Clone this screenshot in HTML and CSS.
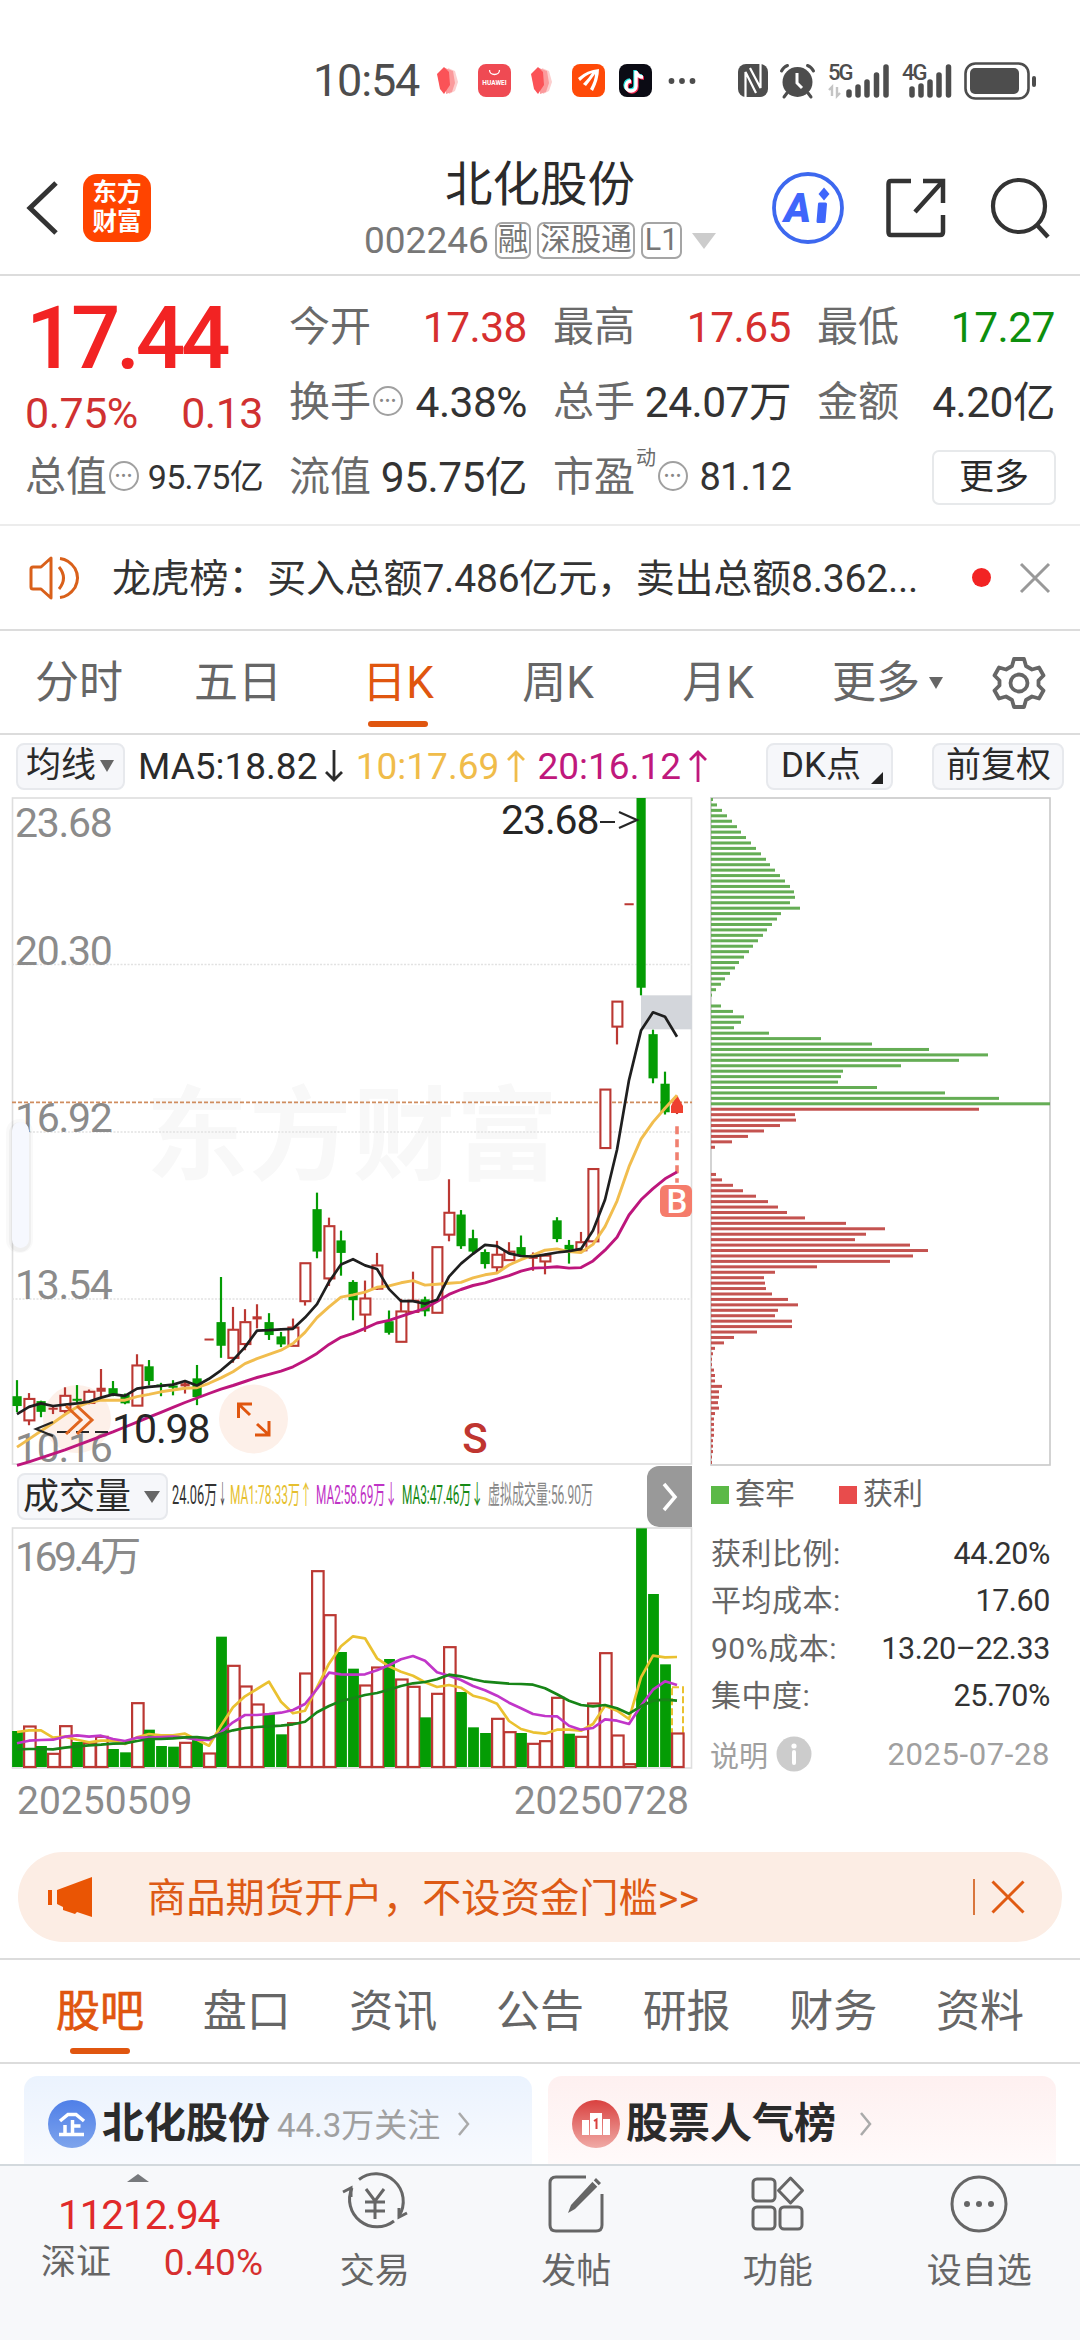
FILE: index.html
```html
<!DOCTYPE html>
<html lang="zh-CN">

<head>
    <meta charset="UTF-8" />
    <meta name="viewport" content="width=device-width, initial-scale=1.0" />
    <title>北化股份 002246</title>
    <link rel="stylesheet" href="styles.css">
</head>

<body>

    <div class="status-bar">
        <span class="time">10:54</span>
        <svg class="st-petal" width="21" height="28" viewBox="0 0 21 28">
            <path d="M11 1l7 3 3 11-3 9-6 3z" fill="#fccfcf" />
            <path d="M8 1l8 3 2 12-3 9-6 2z" fill="#fb9a9c" />
            <path d="M7 0l5 5 1 13-6 9-4-5-3-15z" fill="#fb5257" />
        </svg>
        <svg class="st-app" width="33" height="33" viewBox="0 0 33 33">
            <rect width="33" height="33" rx="8" fill="#ef4a53" />
            <path d="M11.500 6a5 4.500 0 0 0 10 0" fill="none" stroke="#fff" stroke-width="1.300" />
            <text x="16.500" y="21" text-anchor="middle" class="hw">HUAWEI</text>
        </svg>
        <svg class="st-petal" width="21" height="28" viewBox="0 0 21 28">
            <path d="M11 1l7 3 3 11-3 9-6 3z" fill="#fccfcf" />
            <path d="M8 1l8 3 2 12-3 9-6 2z" fill="#fb9a9c" />
            <path d="M7 0l5 5 1 13-6 9-4-5-3-15z" fill="#fb5257" />
        </svg>
        <svg class="st-app" width="33" height="33" viewBox="0 0 33 33">
            <rect width="33" height="33" rx="8" fill="#ff4a08" />
            <path d="M6 14Q15 6 27 5Q27 15 21 27L18 25Q23 16 23 10Q18 17 14 22L11 20Q17 14 20 9Q14 11 8 17z" fill="#fff" />
        </svg>
        <svg class="st-app st-tiktok" width="33" height="33" viewBox="0 0 33 33">
            <rect width="33" height="33" rx="8" fill="#0b0b14" />
            <g fill="none" stroke-width="3.400">
                <path d="M16 6v15a5 5 0 1 1-5-5M16 7q2 5 7 5" stroke="#27e6e4" />
                <path d="M18 8v15a5 5 0 1 1-5-5M18 9q2 5 7 5" stroke="#fb2c55" />
                <path d="M17 7v15a5 5 0 1 1-5-5M17 8q2 5 7 5" stroke="#fff" />
            </g>
        </svg>
        <svg class="st-more" width="28" height="8" viewBox="0 0 28 8" fill="#4d4d4d">
            <circle cx="3.500" cy="4" r="2.900" />
            <circle cx="14" cy="4" r="2.900" />
            <circle cx="24.500" cy="4" r="2.900" />
        </svg>
        <svg class="st-nfc" width="30" height="33" viewBox="0 0 30 33">
            <rect width="30" height="33" rx="8" fill="#4d4d4d" />
            <path d="M7.500 33V8L18 29M12 4l10.500 20V0" stroke="#fff" stroke-width="2.200" fill="none" />
        </svg>
        <svg class="st-alarm" width="35" height="34" viewBox="0 0 35 34">
            <circle cx="17.500" cy="18" r="15" fill="#4d4d4d" />
            <path d="M1.500 7q2-4 6-5.500M33.500 7q-2-4-6-5.500M7 29l-3 4M28 29l3 4" stroke="#4d4d4d" stroke-width="3" fill="none" stroke-linecap="round" />
            <path d="M17 9v10l5 5" stroke="#fff" stroke-width="3" fill="none" />
        </svg>
        <svg class="st-signal" width="62" height="35" viewBox="0 0 62 35">
            <text x="0" y="17" class="net">5G</text>
            <path d="M4 33V24l-3 3M9 24v9l3-3" stroke="#c4c4c4" stroke-width="2.400" fill="none" />
            <path d="M21 32v-3M30 32v-8M39 32V19M48.500 32V12M58 32V4" stroke="#4d4d4d" stroke-width="5.500" stroke-linecap="round" />
        </svg>
        <svg class="st-signal2" width="50" height="35" viewBox="0 0 50 35">
            <text x="0" y="17" class="net">4G</text>
            <path d="M10 32v-6M19 32v-9M28 32V19M37 32V12M46.500 32V4" stroke="#4d4d4d" stroke-width="5.500" stroke-linecap="round" />
        </svg>
        <svg class="st-battery" width="74" height="38" viewBox="0 0 74 38">
            <rect x="1.500" y="1.500" width="63" height="35" rx="10" fill="none" stroke="#4d4d4d" stroke-width="2.600" />
            <rect x="6" y="6" width="49" height="26" rx="5" fill="#4d4d4d" />
            <rect x="68" y="14" width="4" height="11" rx="2" fill="#4d4d4d" />
        </svg>
    </div>

    <header class="header">
        <svg class="back" width="34" height="56" viewBox="0 0 34 56">
            <path d="M30 3L4 28l26 25" fill="none" stroke="#333" stroke-width="5" />
        </svg>
        <div class="logo">东方<br>财富</div>
        <div class="title">
            <h1>北化股份</h1>
            <div class="code">
                <span class="num">002246</span>
                <span class="tag">融</span>
                <span class="tag">深股通</span>
                <span class="tag">L1</span>
                <svg width="24" height="16" viewBox="0 0 24 16">
                    <path d="M0 0h24L12 16z" fill="#ccc" />
                </svg>
            </div>
        </div>
        <svg class="ai" width="72" height="72" viewBox="0 0 72 72">
            <circle cx="36" cy="36" r="34" fill="none" stroke="#3d68ef" stroke-width="3.800" />
            <text x="12" y="50" class="ai-text">A</text>
            <path d="M47.500 32h6l-1.500 17.500h-6z" fill="#3f66fb" stroke="#3f66fb" stroke-width="3" stroke-linejoin="round" />
            <path d="M52 15.500l5.500 6.500-5.500 6.500-5.500-6.500z" fill="#3f66fb" />
        </svg>
        <svg class="share" width="60" height="60" viewBox="0 0 60 60" fill="none" stroke="#333" stroke-width="4.500">
            <path d="M25 3H5Q2.500 3 2.500 6V54Q2.500 57 5 57H54Q57 57 57 54V37" />
            <path d="M37 3H57V25M57 3L29 34" />
        </svg>
        <svg class="search" width="62" height="62" viewBox="0 0 62 62" fill="none" stroke="#333" stroke-width="4.200">
            <circle cx="29" cy="29" r="26" />
            <path d="M47 48L58 60" stroke-width="4.500" />
        </svg>
    </header>

    <section class="quote">
        <div class="price-box">
            <div class="price">17.44</div>
            <div class="change"><span>0.75%</span><span>0.13</span></div>
        </div>
        <div class="cell"><label>今开</label><b class="red">17.38</b></div>
        <div class="cell"><label>最高</label><b class="red">17.65</b></div>
        <div class="cell"><label>最低</label><b class="green">17.27</b></div>
        <div class="cell"><label>换手<i class="tip">•••</i></label><b>4.38%</b></div>
        <div class="cell"><label>总手</label><b>24.07万</b></div>
        <div class="cell"><label>金额</label><b>4.20亿</b></div>
        <div class="cell"><label>总值<i class="tip">•••</i></label><b class="small">95.75亿</b></div>
        <div class="cell"><label>流值</label><b>95.75亿</b></div>
        <div class="cell"><label>市盈<sup>动</sup><i class="tip">•••</i></label><b class="mid">81.12</b></div>
        <div class="cell"><button class="more">更多</button></div>
    </section>

    <section class="news">
        <svg class="horn" width="52" height="46" viewBox="0 0 52 46" fill="none" stroke="#d9601a" stroke-width="3">
            <path d="M22 3v40L12 34H4q-2 0-2-2V14q0-2 2-2h8z" stroke-linejoin="round" />
            <path d="M30 12q9 11 0 22M31 3.500q9 1 15 10q5 9 0 19q-6 9-15 10" />
        </svg>
        <p>龙虎榜：买入总额7.486亿元，卖出总额8.362...</p>
        <span class="dot"></span>
        <svg class="close" width="30" height="30" viewBox="0 0 30 30">
            <path d="M1 1l28 28M29 1L1 29" stroke="#999" stroke-width="3" />
        </svg>
    </section>

    <nav class="periods">
        <span>分时</span>
        <span>五日</span>
        <span class="active">日K</span>
        <span>周K</span>
        <span>月K</span>
        <span class="drop">更多<i></i></span>
        <svg width="52" height="52" viewBox="0 0 52 52" fill="none" stroke="#666" stroke-width="3.800">
            <path d="M21 2h10l2 7 6 3.500 7-2 4.500 8-5 5v5l5 5-4.500 8-7-2-6 3.500-2 7H21l-2-7-6-3.500-7 2-4.500-8 5-5v-5l-5-5 4.500-8 7 2L19 9z" stroke-linejoin="round" />
            <circle cx="26" cy="26" r="8.500" />
        </svg>
    </nav>

    <div class="ma-row">
        <button class="pill-btn ma-btn">均线<i></i></button>
        <div class="ma-values">
            <span>MA5:18.82<svg class="arrow" viewBox="0 0 20 32"><path d="M10 0v30M2 22l8 8 8-8" /></svg></span>
            <span class="yellow">10:17.69<svg class="arrow" viewBox="0 0 20 32"><path d="M10 32V2M2 10l8-8 8 8" /></svg></span>
            <span class="magenta">20:16.12<svg class="arrow" viewBox="0 0 20 32"><path d="M10 32V2M2 10l8-8 8 8" /></svg></span>
        </div>
        <button class="pill-btn dk-btn">DK点<i></i></button>
        <button class="pill-btn fq-btn">前复权</button>
    </div>

    <main class="charts">
        <div class="left">
            <svg id="kline" width="692" height="669"></svg>
            <div class="vol-head">
                <button class="pill-btn vol-btn">成交量<i></i></button>
                <svg class="vol-legend" width="424" height="40">
                    <text x="0" y="27" textLength="45" lengthAdjust="spacingAndGlyphs" fill="#333">24.06万</text>
                    <text x="47" y="27" textLength="7" lengthAdjust="spacingAndGlyphs" fill="#333">↓</text>
                    <text x="58" y="27" textLength="82" lengthAdjust="spacingAndGlyphs" fill="#e6bf2e">MA1:78.33万↑</text>
                    <text x="144" y="27" textLength="81" lengthAdjust="spacingAndGlyphs" fill="#bf33c6">MA2:58.69万↓</text>
                    <text x="230" y="27" textLength="81" lengthAdjust="spacingAndGlyphs" fill="#168a16">MA3:47.46万↓</text>
                    <text x="316" y="27" textLength="105" lengthAdjust="spacingAndGlyphs" fill="#888">虚拟成交量:56.90万</text>
                </svg>
                <div class="next">
                    <svg width="16" height="30" viewBox="0 0 16 30">
                        <path d="M2 2l11 13L2 28" fill="none" stroke="#fff" stroke-width="3.500" />
                    </svg>
                </div>
            </div>
            <svg id="volume" width="692" height="242"></svg>
            <div class="dates"><span>20250509</span><span>20250728</span></div>
        </div>

        <div class="right">
            <svg id="chips" width="342" height="669"></svg>
            <div class="legend">
                <span><i class="sq-green"></i>套牢</span>
                <span><i class="sq-red"></i>获利</span>
            </div>
            <dl class="stats">
                <div><dt>获利比例:</dt><dd>44.20%</dd></div>
                <div><dt>平均成本:</dt><dd>17.60</dd></div>
                <div><dt>90%成本:</dt><dd>13.20–22.33</dd></div>
                <div><dt>集中度:</dt><dd>25.70%</dd></div>
            </dl>
            <div class="note">
                <span>说明</span>
                <svg width="36" height="36" viewBox="0 0 36 36">
                    <circle cx="18" cy="18" r="17.500" fill="#ccc" />
                    <circle cx="18" cy="10" r="2.600" fill="#fff" />
                    <path d="M18 16v11" stroke="#fff" stroke-width="4" stroke-linecap="round" />
                </svg>
                <span class="date">2025-07-28</span>
            </div>
        </div>
    </main>

    <div class="promo">
        <svg class="mega" width="46" height="40" viewBox="0 0 46 40" fill="#ea5504">
            <rect x="0" y="13" width="4" height="15" />
            <path d="M9 13L44 0v40l-15-5-2 2-12-4v-3l-6-3z" />
        </svg>
        <p>商品期货开户，不设资金门槛&gt;&gt;</p>
        <span class="bar"></span>
        <svg width="34" height="34" viewBox="0 0 34 34">
            <path d="M1.500 1.500l31 31M32.500 1.500l-31 31" stroke="#e05a12" stroke-width="3" />
        </svg>
    </div>

    <nav class="tabs">
        <span class="active">股吧</span>
        <span>盘口</span>
        <span>资讯</span>
        <span>公告</span>
        <span>研报</span>
        <span>财务</span>
        <span>资料</span>
    </nav>

    <div class="cards">
        <div class="card blue">
            <svg width="48" height="48" viewBox="0 0 48 48">
                <defs>
                    <linearGradient id="gb" x2="0" y2="1"><stop stop-color="#4f7fe8" /><stop offset="1" stop-color="#7ea4ec" /></linearGradient>
                </defs>
                <circle cx="24" cy="24" r="24" fill="url(#gb)" />
                <path d="M12 21L20 14.500h8L36 21M24.500 20v13M24.500 26h8M17 25v8M11 34.500h25" fill="none" stroke="#fff" stroke-width="3.500" />
            </svg>
            <strong>北化股份</strong>
            <em>44.3万关注</em>
            <svg class="chev" width="14" height="24" viewBox="0 0 14 24"><path d="M2 1l9 11-9 11" /></svg>
        </div>
        <div class="card pink">
            <svg width="48" height="48" viewBox="0 0 48 48">
                <defs>
                    <linearGradient id="gr" x2="0" y2="1"><stop stop-color="#d9413f" /><stop offset="1" stop-color="#f0aaa6" /></linearGradient>
                </defs>
                <circle cx="24" cy="24" r="24" fill="url(#gr)" />
                <path d="M10 20h7v15h-7zM18 13h12v22H18zM31 19h7v16h-7z" fill="#fff" />
                <path d="M22 21l2.500-1.500V29" stroke="#d9413f" stroke-width="2" fill="none" />
            </svg>
            <strong>股票人气榜</strong>
            <svg class="chev wide" width="14" height="24" viewBox="0 0 14 24"><path d="M2 1l9 11-9 11" /></svg>
        </div>
    </div>

    <footer class="toolbar">
        <div class="index">
            <svg width="22" height="8" viewBox="0 0 22 8"><path d="M0 8L11 0l11 8z" fill="#77797c" /></svg>
            <b>11212.94</b>
            <div><span>深证</span><span class="red">0.40%</span></div>
        </div>
        <div class="tool">
            <svg width="66" height="60" viewBox="0 0 66 60" fill="none" stroke="#666" stroke-width="3">
                <path d="M17 6.500A27.500 27.500 0 0 1 57 43M52 48A27.500 27.500 0 0 1 10 15" />
                <path d="M1 19l8-4v9M65 40l-8 4v-9" />
                <path d="M24 16l9 12 9-12M33 28v18M23 29h20M23 38h20" />
            </svg>
            <span>交易</span>
        </div>
        <div class="tool">
            <svg width="60" height="60" viewBox="0 0 60 60">
                <path d="M40 4H10Q4 4 4 10v42q0 6 6 6h40q6 0 6-6V21" fill="none" stroke="#666" stroke-width="3" />
                <path d="M50 5l5 5-26 26-7 4 3-8z" fill="#666" />
                <path d="M46 7l7 7" stroke="#f7f8fa" stroke-width="2" />
            </svg>
            <span>发帖</span>
        </div>
        <div class="tool">
            <svg width="60" height="60" viewBox="0 0 60 60" fill="none" stroke="#666" stroke-width="3">
                <rect x="5" y="6" width="22" height="22" rx="4" />
                <rect x="5" y="34" width="22" height="22" rx="4" />
                <rect x="32" y="34" width="22" height="22" rx="4" />
                <path d="M42.500 5l12 12.500-12 12.500-12-12.500z" stroke-linejoin="round" />
            </svg>
            <span>功能</span>
        </div>
        <div class="tool">
            <svg width="60" height="60" viewBox="0 0 60 60">
                <circle cx="30" cy="31" r="27" fill="none" stroke="#666" stroke-width="3" />
                <g fill="#666"><circle cx="18" cy="31" r="3" /><circle cx="30" cy="31" r="3" /><circle cx="42" cy="31" r="3" /></g>
            </svg>
            <span>设自选</span>
        </div>
    </footer>

    <script src="script.js"></script>

</body>

</html>
```

FILE: styles.css
```css
* {
    box-sizing: border-box;
    margin: 0;
    padding: 0;
}

body {
    width: 1080px;
    height: 2340px;
    overflow: hidden;
    background: #fff;
    color: #333;
    font-family: Roboto, "Noto Sans CJK SC", sans-serif;
}

svg {
    display: block;
    flex: none;
    overflow: visible;
}

i,
em {
    font-style: normal;
}

button {
    font-family: inherit;
    color: #2a2a2a;
    white-space: nowrap;
}

/* status bar */
.status-bar {
    display: flex;
    align-items: center;
    height: 140px;
    padding: 21px 0 0 313px;
}

.time {
    width: 124px;
    font-size: 45px;
    letter-spacing: -1.2px;
    color: #4d4d4d;
}

.st-app {
    margin: 0 20px;
}

.st-tiktok {
    margin: 0 16px 0 -6px;
}

.st-nfc {
    margin-left: 42px;
}

.st-alarm {
    margin-left: 12px;
}

.st-signal {
    margin-left: 13px;
}

.st-signal2 {
    margin-left: 12px;
}

.st-battery {
    margin-left: 12px;
}

.hw {
    font-size: 6.5px;
    font-weight: bold;
    fill: #fff;
}

.net {
    font-size: 22px;
    font-weight: 500;
    letter-spacing: -2px;
    fill: #4d4d4d;
}

/* header */
.header {
    display: flex;
    align-items: center;
    height: 136px;
    padding: 2px 28px 0 26px;
    border-bottom: 2px solid #dcdcdc;
}

.logo {
    width: 68px;
    height: 68px;
    margin-left: 23px;
    padding-top: 4px;
    border-radius: 14px;
    background: #ff4400;
    color: #fff;
    font-size: 24.5px;
    font-weight: bold;
    line-height: 29px;
    text-align: center;
}

.title {
    width: 352px;
    margin-left: 213px;
    text-align: center;
}

.title h1 {
    padding-top: 3px;
    font-size: 47.5px;
    font-weight: normal;
    line-height: 60px;
    color: #2b2b2b;
}

.code {
    display: flex;
    align-items: center;
    gap: 6px;
    height: 48px;
    margin-top: 2px;
    color: #777;
    white-space: nowrap;
}

.code .num {
    font-size: 37px;
}

.tag {
    flex: none;
    padding: 0 1px;
    height: 37px;
    border: 2px solid #a5a5a5;
    border-radius: 7px;
    font-size: 30.5px;
    line-height: 32px;
}

.tag:nth-child(4) {
    padding: 0 2px;
}

.code svg {
    margin-left: 4px;
}

.ai {
    margin-left: 56px;
}

.ai-text {
    font-size: 41px;
    font-weight: 900;
    font-style: italic;
    fill: #3f66fb;
}

.share {
    margin-left: 42px;
}

.search {
    margin-left: 44px;
}

/* quote */
.quote {
    display: grid;
    grid-template-columns: repeat(4, 1fr);
    grid-auto-rows: 75px;
    column-gap: 26px;
    height: 250px;
    padding: 14px 25px 0;
    border-bottom: 2px solid #ececec;
}

.price-box {
    grid-row: span 2;
}

.price {
    height: 97px;
    padding-left: 1px;
    font-size: 87px;
    font-weight: 500;
    letter-spacing: -4.4px;
    line-height: 97px;
    color: #f22323;
}

.change {
    display: flex;
    justify-content: space-between;
    font-size: 43px;
    letter-spacing: -.5px;
    line-height: 53px;
    color: #d03131;
}

.cell {
    display: flex;
    align-items: center;
    justify-content: space-between;
    font-size: 42.5px;
    line-height: 75px;
    white-space: nowrap;
}

.cell label {
    display: flex;
    align-items: center;
    font-size: 41px;
    color: #6a6a6a;
}

.cell b {
    font-weight: normal;
    letter-spacing: -.5px;
}

.cell .small {
    font-size: 34px;
    letter-spacing: -.7px;
}

.cell .mid {
    font-size: 38px;
    letter-spacing: -.8px;
}

.tip {
    width: 30px;
    height: 30px;
    margin: -4px 0 0 2px;
    border: 2px solid #a0a0a0;
    border-radius: 50%;
    font-size: 15px;
    letter-spacing: 1px;
    line-height: 27px;
    text-align: center;
    color: #888;
}

.cell sup {
    align-self: flex-start;
    margin: 6px 0 0 1px;
    font-size: 20px;
    line-height: 24px;
}

.more {
    width: 124px;
    height: 55px;
    margin: 0 -1px 0 auto;
    border: 2px solid #e7e9eb;
    border-radius: 7px;
    background: #fff;
    font-size: 35px;
    line-height: 46px;
}

.red {
    color: #d62f2f;
}

.green {
    color: #0d8f0d;
}

/* news */
.news {
    display: flex;
    align-items: center;
    height: 105px;
    padding: 0 29px;
    border-bottom: 2px solid #dcdcdc;
}

.news p {
    width: 891px;
    padding: 0 0 5px 31px;
    font-size: 39px;
    letter-spacing: -.2px;
    white-space: nowrap;
}

.dot {
    flex: none;
    width: 19px;
    height: 19px;
    border-radius: 50%;
    background: #f22323;
}

.close {
    margin-left: 29px;
}

/* chart period tabs */
.periods {
    display: grid;
    grid-template-columns: 158px repeat(4, 160px) 195px 52px;
    align-items: center;
    height: 104px;
    border-bottom: 2px solid #dcdcdc;
    font-size: 44px;
    line-height: 104px;
    text-align: center;
    color: #666;
}

.active {
    position: relative;
    color: #e0560f;
}

.active::after {
    content: "";
    position: absolute;
    left: 50%;
    bottom: 8px;
    width: 60px;
    height: 6px;
    margin-left: -30px;
    border-radius: 3px;
    background: #e0560f;
}

.drop {
    display: flex;
    align-items: center;
    padding-left: 34px;
}

.drop i,
.ma-btn i,
.vol-btn i {
    margin-left: 9px;
    border: 7px solid transparent;
    border-top: 12px solid #666;
    border-bottom: 0;
}

/* averages */
.ma-row {
    display: flex;
    align-items: center;
    height: 62px;
    padding-left: 16px;
}

.pill-btn {
    display: flex;
    align-items: center;
    height: 47px;
    border: 2px solid #e7e9ed;
    border-radius: 8px;
    background: #f6f7fa;
    font-size: 35px;
    line-height: 40px;
}

.ma-btn {
    width: 109px;
    padding-left: 8px;
}

.ma-btn i {
    margin-left: 4px;
}

.ma-values {
    display: flex;
    justify-content: space-between;
    width: 583px;
    padding-left: 13px;
    font-size: 37px;
    letter-spacing: 0;
    white-space: nowrap;
    color: #2b2b2b;
}

.ma-values span {
    display: flex;
    align-items: center;
}

.arrow {
    width: 20px;
    height: 32px;
    margin-left: 7px;
    fill: none;
    stroke: currentColor;
    stroke-width: 2.8px;
}

.ma-values .yellow {
    color: #f0bc4a;
}

.ma-values .magenta {
    color: #c0187c;
}

.dk-btn {
    width: 127px;
    margin-left: 58px;
    padding-left: 13px;
}

.dk-btn i {
    align-self: flex-end;
    margin: 0 0 4px 10px;
    border-left: 12px solid transparent;
    border-bottom: 12px solid #222;
}

.fq-btn {
    width: 132px;
    margin-left: 39px;
    padding-left: 12px;
}

/* charts */
.charts {
    display: flex;
    height: 1055px;
}

.left {
    width: 692px;
}

.right {
    width: 342px;
    margin-left: 18px;
}

.axis {
    font-size: 41px;
    letter-spacing: -1.3px;
    fill: #8b8b8b;
}

.mark {
    font-size: 41px;
    letter-spacing: -1.1px;
    fill: #262626;
}

.watermark {
    font-size: 102px;
    font-weight: bold;
    fill: #f8f8f8;
}

.signal {
    font-size: 42px;
    font-weight: 500;
    fill: #bf3530;
}

.buy {
    font-size: 33px;
    font-weight: 500;
    fill: #fff;
}

.vol-head {
    display: flex;
    align-items: center;
    height: 61px;
    padding-left: 17px;
}

.vol-btn {
    width: 151px;
    padding-left: 4px;
    font-size: 36px;
}

.vol-btn i {
    margin-left: 13px;
    border-width: 12px 8px 0;
}

.vol-legend {
    margin-left: 4px;
    font-size: 26px;
}

.next {
    display: flex;
    align-items: center;
    justify-content: center;
    width: 45px;
    height: 61px;
    margin-left: auto;
    border-radius: 12px 0 0 12px;
    background: #999;
}

.dates {
    display: flex;
    justify-content: space-between;
    padding: 7px 3px 0 17px;
    font-size: 39px;
    letter-spacing: 0;
    line-height: 50px;
    color: #8b8b8b;
}

.legend {
    display: flex;
    gap: 43px;
    height: 56px;
    font-size: 30px;
    line-height: 56px;
    color: #666;
}

.legend i {
    display: inline-block;
    width: 18px;
    height: 18px;
    margin: 0 6px 0 1px;
}

.sq-green {
    background: #5bb947;
}

.sq-red {
    background: #e84c4c;
}

.stats {
    margin-top: 8px;
    font-size: 30px;
}

.stats div {
    display: flex;
    justify-content: space-between;
    height: 47.3px;
    padding-right: 2px;
    line-height: 47px;
}

.stats dt {
    padding-left: 1px;
    letter-spacing: .5px;
    color: #666;
}

.stats dd {
    font-size: 30.5px;
    letter-spacing: -.4px;
    color: #333;
}

.note {
    display: flex;
    align-items: center;
    height: 40px;
    margin-top: 15px;
    padding-right: 2px;
    font-size: 29px;
    color: #a0a0a0;
}

.note svg {
    margin-left: 8px;
}

.note .date {
    margin-left: auto;
    font-size: 31px;
    letter-spacing: .6px;
}

/* promo */
.promo {
    display: flex;
    align-items: center;
    width: 1044px;
    height: 90px;
    margin: 0 18px 16px;
    padding: 0 37px 0 30px;
    border-radius: 45px;
    background: #fcede4;
    color: #dd5a15;
}

.promo p {
    margin-left: 53px;
    padding-bottom: 6px;
    font-size: 39.3px;
}

.bar {
    width: 2px;
    height: 36px;
    margin: 0 16px 0 auto;
    background: #d9763d;
}

/* info tabs */
.tabs {
    display: flex;
    justify-content: space-between;
    height: 106px;
    padding: 0 56px;
    border-top: 2px solid #dcdcdc;
    border-bottom: 2px solid #dcdcdc;
    font-size: 44px;
    line-height: 105px;
    color: #666;
}

.tabs .active {
    -webkit-text-stroke: .7px #e0560f;
}

.cards {
    display: flex;
    gap: 16px;
    height: 100px;
    padding: 12px 24px 0;
}

.card {
    display: flex;
    align-items: center;
    width: 508px;
    height: 88px;
    padding: 8px 0 0 24px;
    border-radius: 14px 14px 0 0;
}

.blue {
    background: linear-gradient(#ebf3fe, #f8fafe);
}

.pink {
    background: linear-gradient(#fef0f0, #fffafa);
}

.card strong {
    margin-left: 6px;
    font-size: 42px;
    line-height: 50px;
    color: #2b2b2b;
}

.card em {
    margin-left: 7px;
    padding-bottom: 2px;
    font-size: 33px;
    color: #a0a0a0;
}

.chev {
    margin-left: 17px;
    fill: none;
    stroke: #aaa;
    stroke-width: 2.5px;
}

.chev.wide {
    margin-left: 23px;
}

/* bottom toolbar */
.toolbar {
    display: grid;
    grid-template-columns: 274px repeat(4, 201.5px);
    height: 176px;
    border-top: 2px solid #d3d9dd;
    background: #f7f8fa;
    color: #666;
}

.index b {
    display: block;
    margin-top: 6px;
    padding-left: 58px;
    font-size: 40.5px;
    font-weight: normal;
    letter-spacing: -1.1px;
    line-height: 54px;
    color: #e02a2a;
}

.index svg {
    margin: 8px 0 0 127px;
}

.index div {
    display: flex;
    justify-content: space-between;
    padding: 0 11px 0 41px;
    font-size: 37px;
    line-height: 42px;
}

.index div span:first-child {
    font-size: 35px;
}

.tool {
    padding-top: 7px;
    font-size: 35px;
    line-height: 50px;
    text-align: center;
}

.tool svg {
    margin: 0 auto 14px;
}
```

FILE: script.js
```js
const NS = "http://www.w3.org/2000/svg";
const RED = "#bb3833";
const GREEN = "#049c04";

function add(parent, tag, attrs, text) {
    const el = document.createElementNS(NS, tag);
    for (const key in attrs) el.setAttribute(key, attrs[key]);
    if (text) el.textContent = text;
    parent.appendChild(el);
    return el;
}

function line(parent, x1, y1, x2, y2, stroke, width, dash) {
    return add(parent, "line", { x1, y1, x2, y2, stroke, "stroke-width": width, "stroke-dasharray": dash || "none" });
}

// [colour, high, body top, body bottom, low]
const candles = [
    ["g", 1344, 1380, 1402, 1416], ["r", 1373, 1385, 1433, 1445], ["g", 1390, 1391, 1415, 1427], ["r", 1400, 1408, 1410, 1420],
    ["r", 1360, 1378, 1412, 1418], ["g", 1355, 1388, 1392, 1395], ["r", 1365, 1369, 1394, 1398], ["r", 1319, 1361, 1370, 1383],
    ["g", 1346, 1362, 1375, 1380], ["g", 1374, 1377, 1396, 1398], ["r", 1286, 1310, 1400, 1400], ["g", 1299, 1313, 1346, 1356],
    ["g", 1350, 1356, 1358, 1380], ["g", 1344, 1356, 1361, 1378], ["r", 1345, 1351, 1358, 1374], ["g", 1310, 1340, 1382, 1400],
    ["r", 1253, 1253, 1253, 1253], ["g", 1113, 1214, 1267, 1294], ["r", 1180, 1230, 1293, 1305], ["r", 1185, 1213, 1262, 1277],
    ["r", 1174, 1201, 1208, 1228], ["g", 1194, 1214, 1243, 1254], ["g", 1236, 1246, 1264, 1270], ["r", 1206, 1225, 1266, 1266],
    ["r", 1081, 1081, 1166, 1177], ["g", 924, 961, 1056, 1071], ["r", 980, 998, 1115, 1133], ["g", 1009, 1031, 1059, 1110],
    ["g", 1120, 1124, 1165, 1210], ["r", 1121, 1160, 1196, 1236], ["r", 1059, 1086, 1138, 1142], ["g", 1188, 1212, 1238, 1242],
    ["r", 1162, 1189, 1257, 1258], ["r", 1101, 1165, 1190, 1192], ["g", 1157, 1163, 1190, 1201], ["r", 1045, 1045, 1192, 1192],
    ["r", 894, 968, 1017, 1033], ["g", 963, 973, 1044, 1050], ["g", 1007, 1026, 1056, 1060], ["g", 1051, 1057, 1084, 1094],
    ["r", 1032, 1062, 1090, 1105], ["r", 1035, 1055, 1074, 1077], ["g", 1020, 1046, 1066, 1068], ["r", 1058, 1070, 1074, 1099],
    ["r", 1060, 1064, 1077, 1107], ["g", 979, 986, 1028, 1035], ["g", 1030, 1041, 1052, 1083], ["r", 1012, 1034, 1052, 1058],
    ["r", 870, 870, 1032, 1034], ["r", 692, 692, 823, 825], ["r", 495, 495, 551, 592], ["r", 278, 278, 278, 278],
    ["g", 40, 40, 465, 482], ["g", 559, 569, 668, 679], ["g", 653, 680, 744, 749], ["r", 708, 728, 738, 748]
];
const ma5 = [1420, 1404, 1396, 1402, 1399, 1396, 1392, 1383, 1376, 1379, 1363, 1359, 1357, 1354, 1346, 1356, 1341, 1322, 1299, 1270, 1233, 1232, 1230, 1229, 1204, 1174, 1124, 1085, 1073, 1087, 1095, 1140, 1167, 1167, 1173, 1164, 1112, 1083, 1061, 1041, 1044, 1060, 1066, 1067, 1063, 1058, 1055, 1050, 1009, 940, 828, 672, 561, 520, 530, 575];
const ma10 = [1494, 1476, 1458, 1440, 1421, 1404, 1394, 1389, 1389, 1389, 1381, 1376, 1370, 1366, 1362, 1361, 1351, 1339, 1325, 1307, 1296, 1286, 1277, 1262, 1237, 1204, 1180, 1158, 1153, 1147, 1136, 1133, 1126, 1121, 1131, 1129, 1127, 1125, 1115, 1108, 1104, 1086, 1074, 1064, 1053, 1050, 1056, 1058, 1040, 1000, 943, 866, 804, 766, 735, 706];
const ma20 = [1535, 1527, 1518, 1509, 1500, 1490, 1480, 1470, 1460, 1449, 1438, 1427, 1416, 1405, 1394, 1384, 1374, 1364, 1356, 1347, 1338, 1331, 1324, 1314, 1300, 1284, 1264, 1248, 1239, 1228, 1216, 1210, 1201, 1192, 1183, 1168, 1152, 1141, 1132, 1126, 1118, 1110, 1100, 1093, 1092, 1090, 1093, 1092, 1077, 1053, 1024, 974, 940, 915, 893, 878];

const xAt = i => 17 + i * 12;
const yAt = v => 1 + (v - 40) / 2.24;

function curve(parent, values, y, stroke, width) {
    const points = values.map((v, i) => xAt(i) + "," + y(v).toFixed(1)).join(" ");
    add(parent, "polyline", { points, fill: "none", stroke, "stroke-width": width, "stroke-linejoin": "round" });
}

const k = document.getElementById("kline");

add(k, "text", { x: 146, y: 375, textLength: 412, class: "watermark" }, "东方财富");
add(k, "rect", { x: 12.5, y: 1, width: 679, height: 666, fill: "none", stroke: "#dedede", "stroke-width": 1.6 });
[413, 788, 1162].forEach(v => line(k, 12, yAt(v), 692, yAt(v), "#e2e2e2", 1.5, "2 1.5"));

// floating buttons under the curves
add(k, "circle", { cx: 77, cy: 622, r: 34, fill: "#fdf0e9" });
add(k, "circle", { cx: 253.5, cy: 622, r: 34.5, fill: "#fdf0e9" });

// unfilled price gap
add(k, "rect", { x: 641, y: yAt(482), width: 51, height: 34, fill: "#d3d6db" });

[["23.68", 128], ["20.30", 414], ["16.92", 788], ["13.54", 1162], ["10.16", 1528]].forEach(([t, v]) => {
    add(k, "text", { x: 15, y: yAt(v), class: "axis" }, t);
});
line(k, 12, yAt(722), 692, yAt(722), "#d08d5f", 1.8, "4 2");

candles.forEach(([c, hi, top, bottom, lo], i) => {
    const x = xAt(i);
    const color = c === "g" ? GREEN : RED;
    const h = (bottom - top) / 2.24;
    if (c === "g" || h < 5) {
        line(k, x, yAt(hi), x, yAt(lo), color, 2.2);
        add(k, "rect", { x: x - 4.5, y: yAt(top) - (h < 2 ? 1 : 0), width: 9.2, height: Math.max(h, 2), fill: color });
        return;
    }
    line(k, x, yAt(hi), x, yAt(top), color, 2.2);
    line(k, x, yAt(bottom), x, yAt(lo), color, 2.2);
    add(k, "rect", { x: x - 4.6, y: yAt(top) + .5, width: 10, height: h, fill: "#fff", stroke: color, "stroke-width": 2.1 });
});

// buy marker
add(k, "path", { d: "M677 298l6 11v7h-12v-7z", fill: "#ef4130" });
line(k, 677, yAt(775), 677, yAt(902), "#f08070", 3.6, "8 5");

curve(k, ma20, yAt, "#bd167c", 2.9);
curve(k, ma10, yAt, "#f1bd4e", 2.9);
curve(k, ma5, yAt, "#1f1f1f", 2.7);

add(k, "rect", { x: 660, y: 388, width: 32, height: 32, rx: 6, fill: "#f57c6b" });
add(k, "text", { x: 677, y: 416, "text-anchor": "middle", class: "buy" }, "B");
add(k, "text", { x: 475, y: 656, "text-anchor": "middle", class: "signal" }, "S");

add(k, "text", { x: 501, y: 37, class: "mark" }, "23.68");
line(k, 600, 25, 615, 25, "#262626", 2);
add(k, "path", { d: "M619 15l18 8-18 8", fill: "none", stroke: "#262626", "stroke-width": 2.2 });
add(k, "text", { x: 112, y: 646, class: "mark" }, "10.98");
add(k, "path", { d: "M53 625l-17 7 17 7", fill: "none", stroke: "#262626", "stroke-width": 2.2 });
line(k, 57, 635, 110, 635, "#262626", 2, "13 6");

add(k, "path", { d: "M66 609l15 14-15 14M77 609l15 14-15 14", fill: "none", stroke: "#e0651f", "stroke-width": 3 });
add(k, "path", { d: "M252 607H238.5V621M239 607.500L250 618M255 638H269V624M268.500 637.500L257 627", fill: "none", stroke: "#e0560f", "stroke-width": 3 });

// drawer handle
add(k, "rect", { x: 6, y: 322, width: 27, height: 134, rx: 13, fill: "#000", "fill-opacity": .025 });
add(k, "rect", { x: 9, y: 325, width: 22, height: 130, rx: 11, fill: "#000", "fill-opacity": .04 });
add(k, "rect", { x: 12, y: 325, width: 17, height: 126, rx: 8.5, fill: "#f6f8fe" });

// volume
const volColors = "grgrrgrrggrgggrgrgrrrggrrrrggrrgrrgrrgggrrgrrrgrrrrrgggr";
const volumes = [816, 801, 861, 883, 800, 849, 850, 832, 870, 880, 731, 812, 861, 863, 850, 835, 882, 533, 619, 681, 735, 765, 826, 791, 642, 335, 467, 579, 629, 678, 624, 600, 660, 682, 775, 703, 563, 699, 805, 822, 778, 818, 822, 853, 845, 715, 824, 832, 732, 581, 828, 914, 208, 405, 616, 822];
const v1 = [819, 814, 814, 836, 833, 842, 850, 845, 845, 855, 835, 825, 829, 829, 824, 842, 860, 800, 745, 712, 690, 668, 728, 763, 755, 685, 614, 562, 532, 538, 598, 622, 638, 650, 670, 684, 678, 686, 710, 719, 734, 786, 810, 820, 824, 812, 812, 815, 795, 740, 755, 780, 655, 590, 595, 594];
const v2 = [853, 845, 843, 842, 833, 829, 833, 830, 840, 846, 836, 836, 834, 833, 836, 842, 843, 820, 790, 768, 768, 765, 761, 753, 735, 690, 641, 646, 647, 646, 634, 619, 601, 591, 605, 640, 650, 663, 681, 694, 710, 731, 748, 765, 771, 772, 800, 812, 807, 781, 785, 795, 740, 692, 667, 678];
const v3 = [871, 870, 870, 871, 866, 862, 859, 857, 854, 853, 846, 840, 840, 838, 835, 834, 838, 824, 814, 807, 804, 802, 800, 796, 788, 760, 741, 726, 718, 708, 702, 692, 681, 673, 669, 661, 647, 652, 661, 668, 671, 674, 675, 677, 688, 706, 725, 738, 742, 738, 748, 764, 742, 725, 722, 725];

const vol = document.getElementById("volume");
const vy = v => 1 + (v - 207) / 3;

add(vol, "rect", { x: 12.5, y: 1, width: 679, height: 240, fill: "none", stroke: "#dedede", "stroke-width": 1.6 });
add(vol, "text", { x: 15, y: 44, class: "axis", textLength: 125 }, "169.4万");
add(vol, "rect", { x: 672, y: vy(685), width: 11, height: 78, fill: "none", stroke: "#eac130", "stroke-width": 2, "stroke-dasharray": "7 3" });

volumes.forEach((v, i) => {
    const x = xAt(i) + .4;
    if (volColors[i] === "g") {
        add(vol, "rect", { x: x - 5.3, y: vy(v), width: 10.8, height: 240 - vy(v), fill: GREEN });
    } else {
        add(vol, "rect", { x: x - 5.3, y: vy(v) + .5, width: 11.5, height: 239.5 - vy(v), fill: "#fff", stroke: RED, "stroke-width": 2.2 });
    }
});
curve(vol, v1, vy, "#eac130", 2.7);
curve(vol, v2, vy, "#c136c9", 2.7);
curve(vol, v3, vy, "#178517", 2.7);

// cost distribution, top to bottom
const lossBars = [2, 6, 11, 16, 21, 26, 30, 35, 40, 45, 50, 55, 59, 64, 69, 74, 79, 83, 84, 79, 89, 70, 66, 61, 56, 52, 47, 42, 38, 33, 28, 24, 19, 14, 10, 5, 1, 0, 10, 22, 33, 30, 23, 58, 110, 161, 218, 277, 248, 190, 132, 130, 127, 166, 234, 288, 339];
const gainBars = [268, 84, 85, 69, 53, 37, 21, 4, 0, 0, 0, 0, 5, 11, 22, 32, 45, 57, 67, 76, 94, 135, 174, 155, 144, 199, 217, 202, 179, 106, 64, 53, 54, 55, 61, 77, 87, 67, 64, 81, 81, 46, 23, 13, 4, 2, 1, 1, 3, 4, 4, 11, 8, 8, 7, 8, 4, 3, 3, 3, 3, 2, 2, 2, 1, 1];

const chips = document.getElementById("chips");
add(chips, "rect", { x: 1, y: 1, width: 339, height: 667, fill: "none", stroke: "#c9c9c9", "stroke-width": 1.6 });
lossBars.concat(gainBars).forEach((w, i) => {
    add(chips, "rect", { x: 1, y: 1 + i * 5.434, width: w, height: 3, fill: i < lossBars.length ? "#65ad55" : "#c45350" });
});
```
